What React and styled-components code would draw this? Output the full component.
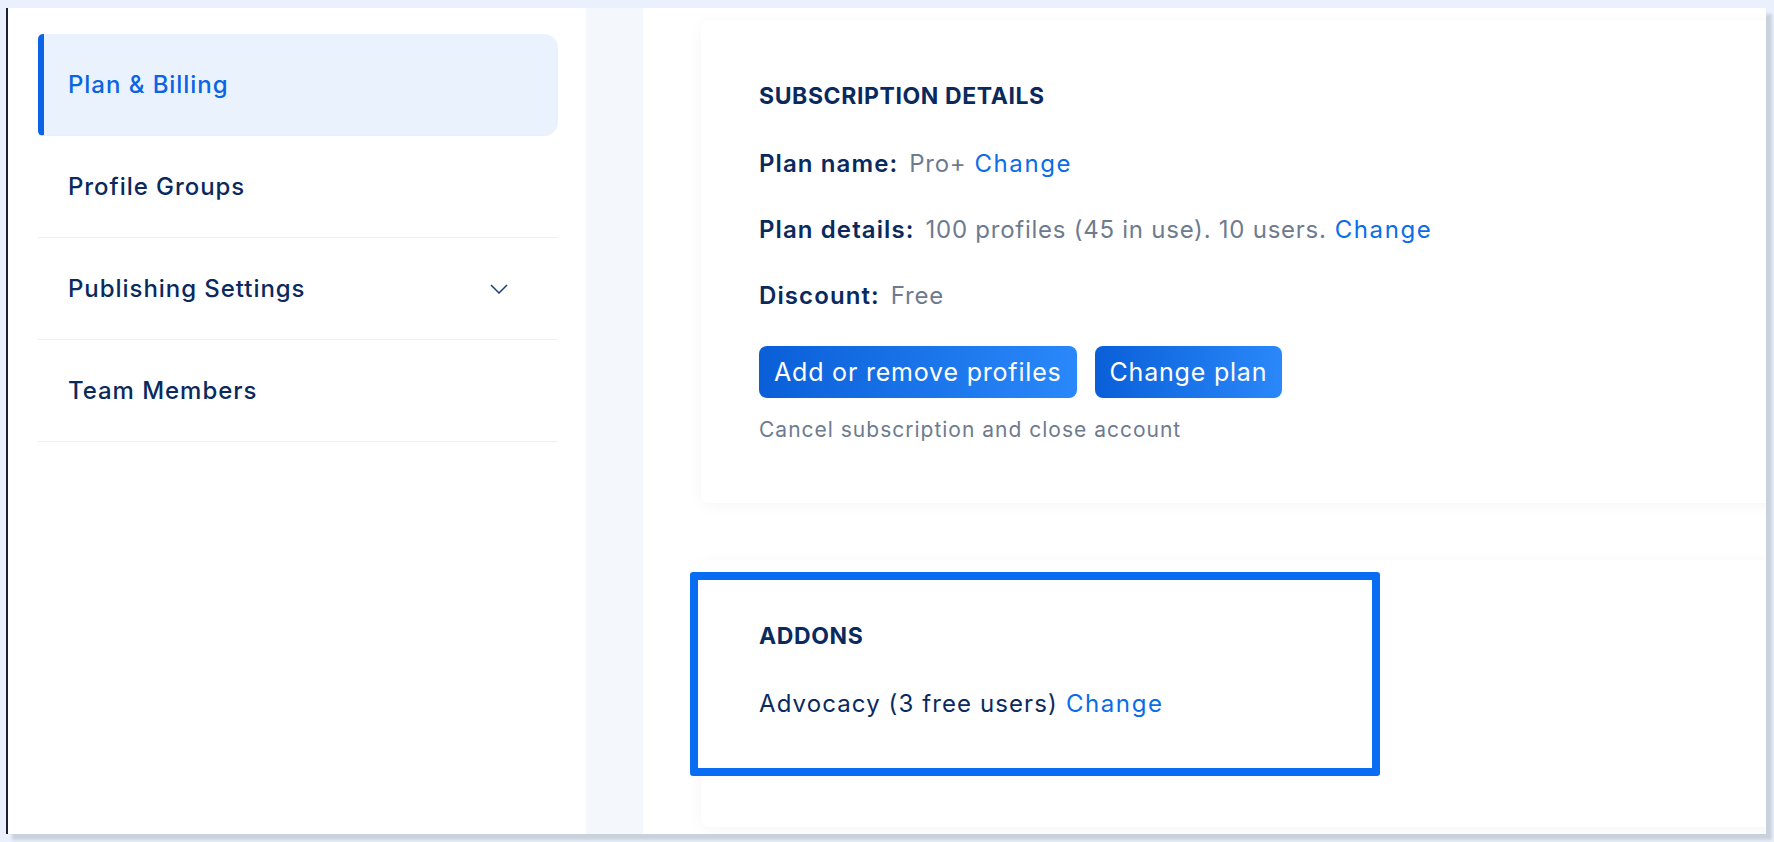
import styled, { createGlobalStyle } from "styled-components";

const GlobalStyle = createGlobalStyle`
    html, body {
        margin: 0;
        padding: 0;
        background-color: #EAF1FC;
        font-family: Inter, "Noto Sans", sans-serif;
    }
    * {
        box-sizing: border-box;
    }
`

const navItems = [
    { label: 'Plan & Billing', active: true },
    { label: 'Profile Groups' },
    { label: 'Publishing Settings', expandable: true },
    { label: 'Team Members' },
]

function Chevron(){
    return(
        <svg width="18" height="10" viewBox="0 0 18 10" fill="none">
            <polyline points="1,1 9,9 17,1" stroke="#1B3F7A" strokeWidth="1.5" />
        </svg>
    )
}

export default function App(){
    return(
        <Page>
        <GlobalStyle />
        <Window>
            <Sidebar>
                {navItems.map(item => (
                    <NavItem key={item.label} active={item.active}>
                        {item.label}
                        {item.expandable && <Chevron />}
                    </NavItem>
                ))}
            </Sidebar>
            <Gutter />
            <Main>
                <Card>
                    <CardTitle>SUBSCRIPTION DETAILS</CardTitle>
                    <DetailRow>
                        <Label>Plan name:</Label>
                        <Value>Pro+</Value>
                        <Link>Change</Link>
                    </DetailRow>
                    <DetailRow>
                        <Label>Plan details:</Label>
                        <Value>100 profiles (45 in use). 10 users.</Value>
                        <Link>Change</Link>
                    </DetailRow>
                    <DetailRow>
                        <Label>Discount:</Label>
                        <Value>Free</Value>
                    </DetailRow>
                    <Buttons>
                        <PrimaryButton>Add or remove profiles</PrimaryButton>
                        <PrimaryButton>Change plan</PrimaryButton>
                    </Buttons>
                    <CancelText>Cancel subscription and close account</CancelText>
                </Card>
                <Card addon>
                    <Highlight />
                    <CardTitle>ADDONS</CardTitle>
                    <DetailRow>
                        <AddonText>Advocacy (3 free users)</AddonText>
                        <Link>Change</Link>
                    </DetailRow>
                </Card>
            </Main>
        </Window>
        </Page>
    )
}

const Page = styled.div`
    width: 100%;
    height: 842px;
    padding: 8px 0 0 6px;
    overflow: hidden;
`
const Window = styled.div`
    width: 1760px;
    height: 826px;
    display: flex;
    background-color: white;
    border-left: 2px solid #1D2230;
    box-shadow: 6px 6px 3px #C9D1DD;
`
const Sidebar = styled.div`
    width: 578px;
    padding: 26px 28px 0 30px;
    display: flex;
    flex-direction: column;
`
const NavItem = styled.div`
    height: 102px;
    display: flex;
    align-items: center;
    justify-content: space-between;
    padding: 0 50px 0 ${p => p.active ? '24px' : '30px'};
    font-size: 24px;
    font-weight: 500;
    letter-spacing: 0.95px;
    color: ${p => p.active ? '#0B63E5' : '#0A2A5E'};
    background-color: ${p => p.active ? '#EAF2FD' : 'transparent'};
    border-left: ${p => p.active ? '6px solid #0B63E5' : 'none'};
    border-radius: ${p => p.active ? '5px 14px 14px 5px' : '0'};
    border-bottom: 1px solid #EDF0F3;
`
const Gutter = styled.div`
    width: 57px;
    background-color: #F4F7FC;
`
const Main = styled.div`
    flex: 1;
    padding: 12px 0 0 58px;
    display: flex;
    flex-direction: column;
    gap: 57px;
    overflow: hidden;
`
const Card = styled.div`
    position: relative;
    width: calc(100% + 30px);
    padding: 64px 0 ${p => p.addon ? '72px' : '61px'} 58px;
    display: flex;
    flex-direction: column;
    background-color: white;
    border-radius: 8px;
    box-shadow: 0 2px 16px rgba(20, 30, 60, 0.045);
`
const Highlight = styled.div`
    position: absolute;
    left: -11px;
    top: 12px;
    width: 690px;
    height: 204px;
    border: 8px solid #086DF2;
    border-radius: 3px;
    pointer-events: none;
`
const CardTitle = styled.h2`
    margin: 0 0 40px 0;
    font-size: 23px;
    line-height: 24px;
    font-weight: 700;
    letter-spacing: 0.6px;
    color: #0A2A5E;
`
const DetailRow = styled.div`
    display: flex;
    align-items: center;
    gap: 8px;
    height: 32px;
    margin-bottom: 34px;
    font-size: 24px;
    line-height: 32px;
    &:last-of-type {
        margin-bottom: 35px;
    }
`
const Label = styled.span`
    font-weight: 600;
    letter-spacing: 1.1px;
    color: #0A2A5E;
    margin-right: 3px;
`
const Value = styled.span`
    letter-spacing: 0.75px;
    color: #6E7B8F;
`
const AddonText = styled.span`
    letter-spacing: 1.1px;
    color: #0A2A5E;
`
const Link = styled.span`
    letter-spacing: 1.6px;
    color: #0B6CEA;
`
const Buttons = styled.div`
    display: flex;
    gap: 18px;
`
const PrimaryButton = styled.button`
    height: 52px;
    padding: 0 15px;
    border: none;
    border-radius: 8px;
    background: linear-gradient(90deg, #0A5FD8, #2A88FA);
    color: white;
    font-family: Inter, "Noto Sans", sans-serif;
    font-size: 25px;
    font-weight: 400;
    letter-spacing: 0.8px;
`
const CancelText = styled.p`
    margin: 20px 0 0 0;
    font-size: 21px;
    line-height: 24px;
    letter-spacing: 1px;
    color: #6E7B8F;
`
